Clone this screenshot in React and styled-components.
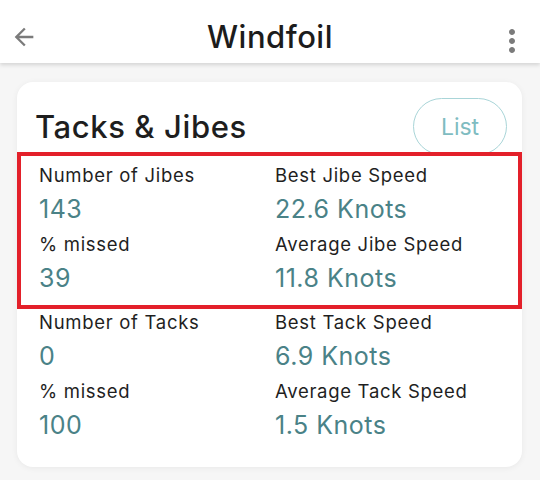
import React from 'react';
import styled, { createGlobalStyle } from 'styled-components';
import { MdArrowBack, MdMoreVert } from 'react-icons/md';

const GlobalStyle = createGlobalStyle`
  html, body {
    margin: 0;
    padding: 0;
    background: #f6f6f6;
    font-family: Inter, "Noto Sans", sans-serif;
  }
`;

const Page = styled.div`
  width: 540px;
  height: 480px;
  overflow: hidden;
  background: #f6f6f6;
`;

const Header = styled.header`
  height: 63px;
  box-sizing: border-box;
  padding: 10px 10px 0 10px;
  display: grid;
  grid-template-columns: 1fr auto 1fr;
  align-items: center;
  background: #fff;
  box-shadow: 0 2px 4px rgba(0, 0, 0, 0.14);
`;

const IconButton = styled.button`
  border: none;
  background: none;
  padding: 0;
  display: flex;
  color: #7b7b7b;
  justify-self: ${(p) => (p.$end ? 'end' : 'start')};
  margin-top: ${(p) => (p.$end ? '9px' : '0')};
`;

const Title = styled.h1`
  margin: 0;
  font-size: 31px;
  letter-spacing: 0.5px;
  font-weight: 500;
  color: #1c1c1c;
  line-height: 36px;
`;

const Card = styled.section`
  margin: 19px 18px 0 17px;
  background: #fff;
  border-radius: 16px;
  box-shadow: 0 1px 6px rgba(0, 0, 0, 0.06);
  padding: 16px 0 18px;
`;

const CardHead = styled.div`
  display: flex;
  align-items: center;
  justify-content: space-between;
  padding: 0 15px 0 18px;
  margin-bottom: -3px;
`;

const CardTitle = styled.h2`
  margin: 0;
  font-size: 31px;
  letter-spacing: 0.6px;
  font-weight: 500;
  color: #1e1e1e;
`;

const ListButton = styled.button`
  width: 94px;
  height: 57px;
  border-radius: 29px;
  border: 1.5px solid #a9d5d8;
  background: #fff;
  color: #7fbcc1;
  font-family: inherit;
  font-size: 23px;
`;

const Group = styled.div`
  position: relative;
  border: 4px solid ${(p) => (p.$highlight ? '#e3202a' : 'transparent')};
  padding: ${(p) => (p.$highlight ? '4px 18px 7px' : '0 18px')};
  margin-top: ${(p) => (p.$highlight ? '0' : '-6px')};
  display: grid;
  grid-template-columns: 236px 1fr;
`;

const Stat = styled.div`
  display: flex;
  flex-direction: column;
`;

const Label = styled.div`
  font-size: 18.5px;
  letter-spacing: 0.7px;
  line-height: 30px;
  color: #1f1f1f;
`;

const Value = styled.div`
  font-size: 25px;
  letter-spacing: 0.5px;
  line-height: 39px;
  color: #4a8287;
`;

const StatBlock = ({ label, value }) => (
  <Stat>
    <Label>{label}</Label>
    <Value>{value}</Value>
  </Stat>
);

const groups = [
  {
    highlight: true,
    stats: [
      ['Number of Jibes', '143'],
      ['Best Jibe Speed', '22.6 Knots'],
      ['% missed', '39'],
      ['Average Jibe Speed', '11.8 Knots'],
    ],
  },
  {
    highlight: false,
    stats: [
      ['Number of Tacks', '0'],
      ['Best Tack Speed', '6.9 Knots'],
      ['% missed', '100'],
      ['Average Tack Speed', '1.5 Knots'],
    ],
  },
];

export default function App() {
  return (
    <Page>
      <GlobalStyle />
      <Header>
        <IconButton aria-label="back">
          <MdArrowBack size={28} />
        </IconButton>
        <Title>Windfoil</Title>
        <IconButton $end aria-label="menu">
          <MdMoreVert size={36} />
        </IconButton>
      </Header>
      <Card>
        <CardHead>
          <CardTitle>Tacks &amp; Jibes</CardTitle>
          <ListButton>List</ListButton>
        </CardHead>
        {groups.map((g, i) => (
          <Group key={i} $highlight={g.highlight}>
            {g.stats.map(([label, value]) => (
              <StatBlock key={label + value} label={label} value={value} />
            ))}
          </Group>
        ))}
      </Card>
    </Page>
  );
}
